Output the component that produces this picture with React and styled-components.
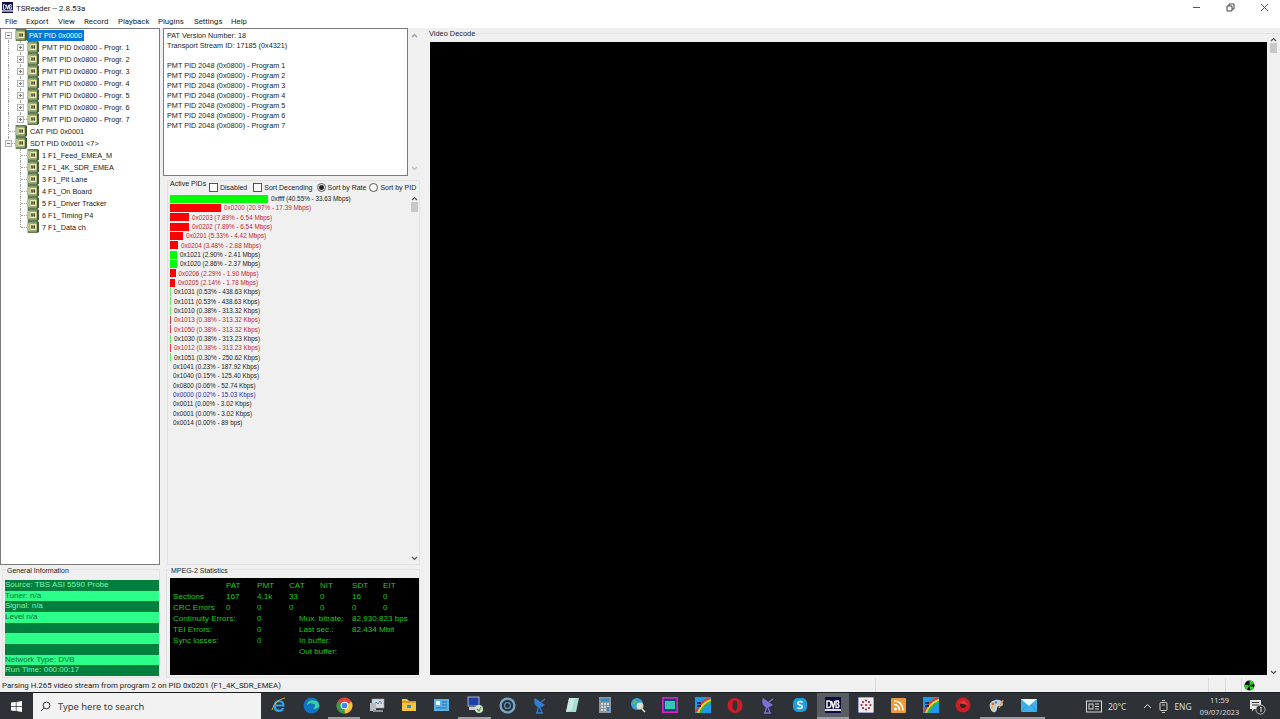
import React from "react";
import styled, { createGlobalStyle } from "styled-components";

const GlobalStyle = createGlobalStyle`
  html, body { margin: 0; padding: 0; background: #f0f0f0; overflow: hidden; }
  * { box-sizing: border-box; }
`;

const Page = styled.div`
  width: 1280px;
  height: 719px;
  display: flex;
  flex-direction: column;
  font-family: "Liberation Sans", Arial, sans-serif;
  color: #1c1c1c;
  overflow: hidden;
`;

const TitleBar = styled.div`
  height: 15px;
  flex: none;
  background: #fff;
  display: flex;
  align-items: center;
  padding-left: 2px;
  font-family: Roboto, sans-serif;
  font-size: 8px;
  gap: 3px;
`;

const TitleText = styled.span`
  flex: 1;
  padding-top: 1px;
`;

const WinButton = styled.div`
  width: 31px;
  height: 15px;
  display: flex;
  align-items: center;
  justify-content: center;
`;

const MenuBar = styled.div`
  height: 13px;
  flex: none;
  background: #fff;
  display: flex;
  align-items: center;
  font-family: Roboto, sans-serif;
  font-size: 7.8px;
  color: #222;
`;

const MenuItem = styled.span`
  width: ${(p) => p.$w}px;
  &:first-child { margin-left: 5px; }
`;

const Main = styled.div`
  height: 650px;
  flex: none;
  display: flex;
`;

const LeftCol = styled.div`
  width: 160px;
  flex: none;
  display: flex;
  flex-direction: column;
`;

const TreeBox = styled.div`
  height: 537px;
  flex: none;
  background: #fff;
  border: 1px solid #7a7a7a;
  padding: 0 0 0 2px;
`;

const TreeRow = styled.div`
  height: 12px;
  display: flex;
  align-items: center;
  font-size: 7.3px;
  white-space: nowrap;
`;

const Guide = styled.span`
  width: 12px;
  height: 12px;
  flex: none;
  position: relative;
  &::before {
    content: "";
    position: absolute;
    left: 5px;
    top: ${(p) => (p.$first ? "6px" : "0")};
    height: ${(p) => (p.$kind === "end" ? "6px" : p.$first ? "6px" : "12px")};
    border-left: 1px dotted ${(p) => (p.$kind === "none" ? "transparent" : "#a0a0a0")};
  }
  &::after {
    content: "";
    position: absolute;
    left: 6px;
    top: 6px;
    width: ${(p) => (p.$kind === "tee" || p.$kind === "end" ? "6px" : "0")};
    border-top: 1px dotted #a0a0a0;
  }
`;

const Expander = styled.span`
  position: absolute;
  left: 2px;
  top: 3px;
  width: 7px;
  height: 7px;
  background: #f4f4f4;
  border: 1px solid #b4b4b4;
  z-index: 1;
  display: flex;
  align-items: center;
  justify-content: center;
  &::before {
    content: "";
    width: 3px;
    border-top: 1px solid #777;
  }
  &::after {
    content: "";
    position: absolute;
    left: 2px;
    top: 0;
    height: 5px;
    display: ${(p) => (p.$open ? "none" : "block")};
    border-left: 1px solid #777;
    transform: scaleY(0.6);
  }
`;

const TreeLabel = styled.span`
  margin-left: ${(p) => (p.$selected ? "0" : "3px")};
  padding: ${(p) => (p.$selected ? "1px 2px" : "0")};
  background: ${(p) => (p.$selected ? "#0078d7" : "transparent")};
  color: ${(p) => (p.$selected ? "#fff" : "#222")};
`;

const Group = styled.div`
  position: relative;
  border: 1px solid #e2e2e2;
  margin: ${(p) => p.$margin || "0"};
  padding: ${(p) => p.$padding || "0"};
  height: ${(p) => p.$h}px;
  display: flex;
  flex-direction: column;
`;

const GroupTitle = styled.span`
  position: absolute;
  left: ${(p) => p.$left || 3}px;
  top: ${(p) => p.$top ?? -4}px;
  padding: 0 1px;
  background: #f0f0f0;
  font-size: ${(p) => p.$size || 7}px;
  line-height: 9px;
`;

const InfoBars = styled.div`
  display: flex;
  flex-direction: column;
`;

const InfoRow = styled.div`
  height: 10.67px;
  line-height: 10.67px;
  font-size: 8px;
  white-space: nowrap;
  background: ${(p) => (p.$dark ? "#00803c" : "#2bff8a")};
  color: ${(p) => (p.$dark ? "#7ff5b0" : "#0b6b38")};
`;

const MidCol = styled.div`
  width: 257px;
  margin-left: 3px;
  flex: none;
  display: flex;
  flex-direction: column;
`;

const TextRow = styled.div`
  height: 148px;
  flex: none;
  display: flex;
`;

const TextPane = styled.div`
  width: 245px;
  flex: none;
  background: #fff;
  border: 1px solid #7a7a7a;
  padding: 2px 3px;
  font-size: 7.25px;
  line-height: 10px;
`;

const TextLine = styled.div`
  height: 10px;
  white-space: nowrap;
`;

const ScrollBar = styled.div`
  width: ${(p) => p.$w || 12}px;
  flex: none;
  display: flex;
  flex-direction: column;
  align-items: center;
  justify-content: space-between;
  padding: ${(p) => p.$pad || "4px 0"};
  margin-top: ${(p) => p.$mt || 0}px;
`;

const ScrollThumb = styled.div`
  width: 7px;
  height: 10px;
  background: #c8c8c8;
  margin-top: 1px;
`;

const ScrollTop = styled.div`
  display: flex;
  flex-direction: column;
  align-items: center;
`;

const PidHeader = styled.div`
  position: absolute;
  left: 2px;
  right: 0;
  top: -2px;
  display: flex;
  align-items: flex-start;
  font-size: 7px;
`;

const PidTitle = styled.span`
  background: #f0f0f0;
  line-height: 9px;
  width: 39px;
  flex: none;
  white-space: nowrap;
`;

const OptionRow = styled.div`
  display: flex;
  align-items: center;
  background: #f0f0f0;
  margin-top: 3px;
  height: 11px;
`;

const Option = styled.label`
  display: flex;
  align-items: center;
  gap: 2px;
  margin-right: ${(p) => p.$gap || 0}px;
  white-space: nowrap;
`;

const CheckBox = styled.span`
  width: 9px;
  height: 9px;
  background: #fff;
  border: 1px solid #555;
  border-radius: ${(p) => (p.$round ? "50%" : "0")};
  display: flex;
  align-items: center;
  justify-content: center;
  &::after {
    content: "";
    display: ${(p) => (p.$on ? "block" : "none")};
    width: 5px;
    height: 5px;
    border-radius: 50%;
    background: #222;
  }
`;

const PidBody = styled.div`
  flex: 1;
  display: flex;
  min-height: 0;
`;

const PidList = styled.div`
  flex: 1;
  padding: 13px 0 0 2px;
`;

const PidRow = styled.div`
  height: 9.33px;
  display: flex;
  align-items: center;
  font-size: 6.35px;
  white-space: nowrap;
  color: ${(p) => p.$color};
`;

const PidBar = styled.span`
  height: 8px;
  flex: none;
  margin-right: 3px;
  background: ${(p) => p.$bar};
  width: ${(p) => p.$w}px;
`;

const StatsPanel = styled.div`
  background: #000;
  height: 97px;
  padding: 2px 0 0 3px;
  display: grid;
  grid-template-columns: 53px 31px 32px 31px 32px 31px 1fr;
  grid-auto-rows: 10.9px;
  align-items: center;
  font-size: 8.1px;
  color: #1fc91f;
  white-space: nowrap;
`;

const StatLabel = styled.span`
  grid-column: ${(p) => p.$col || "auto"};
  padding-left: ${(p) => p.$pad || 0}px;
`;

const RightCol = styled.div`
  width: 858px;
  margin-left: 5px;
  flex: none;
  position: relative;
  height: 650px;
`;

const VideoFrame = styled.div`
  height: 648px;
  margin-top: 5px;
  border-top: 1px solid #e2e2e2;
  padding: 8px 0 0 5px;
  display: flex;
`;

const VideoScreen = styled.div`
  width: 837px;
  height: 633px;
  flex: none;
  background: #000;
`;

const StatusBar = styled.div`
  height: 14px;
  flex: none;
  display: flex;
  align-items: center;
  background: #f0f0f0;
  font-family: Roboto, sans-serif;
  font-size: 7.9px;
  padding-left: 2px;
  color: #222;
`;

const StatusText = styled.span`
  width: 873px;
  flex: none;
  white-space: nowrap;
`;

const StatusCell = styled.span`
  width: ${(p) => p.$w}px;
  height: 14px;
  flex: none;
  border-left: 1px solid #dcdcdc;
  display: flex;
  align-items: center;
  justify-content: center;
`;

const TaskBar = styled.div`
  height: 27px;
  flex: none;
  background: #2e3236;
  display: flex;
  align-items: center;
  color: #e8e8e8;
  font-family: "Noto Sans", sans-serif;
  border-top: 1px solid #1c1f22;
`;

const StartButton = styled.div`
  width: 33px;
  height: 100%;
  flex: none;
  display: flex;
  align-items: center;
  justify-content: center;
`;

const SearchBox = styled.div`
  width: 228px;
  height: 100%;
  flex: none;
  background: #f2f2f2;
  color: #3a3a3a;
  display: flex;
  align-items: center;
  font-size: 9.4px;
  padding-left: 7px;
  gap: 7px;
`;

const TaskIcons = styled.div`
  display: flex;
  height: 100%;
  margin-left: 1.7px;
`;

const TaskIcon = styled.div`
  width: 32.6px;
  height: 100%;
  flex: none;
  display: flex;
  align-items: center;
  justify-content: center;
  background: ${(p) => (p.$active ? "#5a5e62" : "transparent")};
  border-bottom: 2px solid ${(p) => (p.$open ? "#9a9da0" : "transparent")};
`;

const Tray = styled.div`
  flex: 1;
  height: 100%;
  display: flex;
  align-items: center;
  font-size: 8.4px;
  white-space: nowrap;
  padding-left: 41px;
`;

const TrayItem = styled.span`
  margin-left: ${(p) => p.$ml || 0}px;
  display: flex;
  align-items: center;
  color: #dcdcdc;
`;

const Clock = styled.div`
  margin-left: 3px;
  width: 50px;
  flex: none;
  text-align: center;
  font-size: 7.4px;
  line-height: 12px;
  color: #dcdcdc;
`;

const Chip = () => (
  <svg width="12" height="12" viewBox="0 0 11 11">
    <rect x="1" y="0.5" width="9" height="10" fill="#7f9a6a" stroke="#5b6e4b" strokeWidth="0.8" />
    <rect x="0" y="2" width="3" height="7" fill="#b5c49c" />
    <rect x="3" y="2.5" width="6" height="6" fill="#efe9a0" />
    <rect x="4" y="4" width="1.2" height="3" fill="#222" />
    <rect x="6" y="4" width="1.2" height="3" fill="#222" />
    <rect x="9" y="1" width="2" height="9" fill="#3f5a35" />
  </svg>
);

const ArrowUp = ({ c = "#555" }) => (
  <svg width="7" height="5" viewBox="0 0 7 5">
    <path d="M1 4 L3.5 1.5 L6 4" fill="none" stroke={c} strokeWidth="1.2" />
  </svg>
);

const ArrowDown = ({ c = "#555" }) => (
  <svg width="7" height="5" viewBox="0 0 7 5">
    <path d="M1 1 L3.5 3.5 L6 1" fill="none" stroke={c} strokeWidth="1.2" />
  </svg>
);

const DvbLogo = ({ size = 11 }) => (
  <svg width={size} height={size} viewBox="0 0 16 16">
    <rect width="16" height="16" fill="#0b0b45" />
    <rect y="12" width="16" height="2" fill="#fff" opacity="0.85" />
    <path d="M2 4 H4 Q6 4 6 7 Q6 10.5 4 10.5 H2 Z" fill="none" stroke="#fff" strokeWidth="1.4" />
    <path d="M6.5 4 L8.3 10.5 L10 4" fill="none" stroke="#fff" strokeWidth="1.4" />
    <path d="M11 4 H13.5 Q14.5 5.5 12.8 7 Q14.8 8.5 13.5 10.5 H11 Z" fill="none" stroke="#fff" strokeWidth="1.3" />
  </svg>
);

const Rainbow = () => (
  <svg width="16" height="16" viewBox="0 0 16 16">
    <rect width="16" height="16" fill="#1e9be8" />
    <path d="M1 15 Q5 4 15 1" fill="none" stroke="#e8352c" strokeWidth="2" />
    <path d="M3 16 Q7 6 16 3" fill="none" stroke="#f6d21e" strokeWidth="2" />
    <path d="M5 16 Q9 8 16 5" fill="none" stroke="#31b54a" strokeWidth="2" />
    <path d="M2 6 h4 M2 9 h4" stroke="#101040" strokeWidth="1.4" />
  </svg>
);

const Dish = ({ c }) => (
  <svg width="16" height="18" viewBox="0 0 16 18">
    <path d="M3 2 L13 9 Q8 13 4 10 Q1 6 3 2 Z" fill={c} />
    <path d="M7 9 L5 17 M7 9 L10 17 M4 17 H11 M9 6 L13 3" stroke={c} strokeWidth="1.3" fill="none" />
  </svg>
);

const taskIcons = [
  <svg width="16" height="16" viewBox="0 0 16 16"><path d="M13.5 9.5 H5 Q5.2 12.5 8 12.5 Q10 12.5 11 11 H13.4 Q12 15 8 15 Q2.5 15 2.5 9 Q2.5 3.5 8 3 Q13.8 3 13.5 9.5 Z M5.1 7.5 H11 Q10.8 5.2 8 5.2 Q5.5 5.2 5.1 7.5 Z" fill="#2d9fe8" fillRule="evenodd" /><path d="M1 13 Q4 3 14 1" fill="none" stroke="#e8b93a" strokeWidth="0.9" /></svg>,
  <svg width="17" height="17" viewBox="0 0 16 16"><circle cx="8" cy="8" r="7.5" fill="#1272c4" /><path d="M15.5 9 Q15 3 9 3 Q4 3 3.5 8 Q7 4.5 11 7 Q12 9 9.5 10.5 Q12.5 12.5 15.5 9 Z" fill="#39d0a0" /></svg>,
  <svg width="17" height="17" viewBox="0 0 16 16"><circle cx="8" cy="8" r="7.5" fill="#de4437" /><path d="M8 8 L14.6 4.4 A7.5 7.5 0 0 1 8 15.5 Z" fill="#f7c52c" /><path d="M8 8 L8 15.5 A7.5 7.5 0 0 1 1.4 4.4 Z" fill="#2ba24c" /><circle cx="8" cy="8" r="3.6" fill="#fff" /><circle cx="8" cy="8" r="2.7" fill="#4285f4" /></svg>,
  <svg width="16" height="15" viewBox="0 0 16 15"><rect x="3" y="1" width="12" height="9" fill="#d8dce0" stroke="#9a9ea2" strokeWidth="0.6" /><path d="M5 7 L7 4 L9 6 L11 3 L13 6" fill="none" stroke="#3a7fc0" strokeWidth="0.9" /><rect x="1" y="5" width="6" height="8" fill="#b8bcc0" /><rect x="4" y="12" width="10" height="2" fill="#8e9296" /></svg>,
  <svg width="16" height="14" viewBox="0 0 16 14"><path d="M1 1 H6 L8 3 H15 V13 H1 Z" fill="#f5c442" /><rect x="1" y="3" width="14" height="2" fill="#d99a20" /><rect x="6" y="7" width="4" height="3" fill="#2d8fd8" /></svg>,
  <svg width="15" height="12" viewBox="0 0 15 12"><rect width="15" height="12" fill="#5cb1e6" /><rect x="2" y="2" width="4" height="4" fill="#f0f6fa" /><path d="M8 3 H13 M8 6 H13 M2 9 H13" stroke="#1f6fae" strokeWidth="1.2" /></svg>,
  <svg width="18" height="18" viewBox="0 0 18 18"><rect x="2" y="1" width="11" height="9" fill="#1f3fa8" stroke="#c8d0dc" strokeWidth="0.8" /><rect x="3" y="11" width="9" height="3" fill="#c8ccd0" /><circle cx="13" cy="13" r="4" fill="#d8e4d0" /><path d="M11 13 L13 15 L15 11" stroke="#3c9a3c" strokeWidth="1.1" fill="none" /></svg>,
  <svg width="17" height="17" viewBox="0 0 16 16"><circle cx="8" cy="8" r="6.5" fill="none" stroke="#7ba7c9" strokeWidth="2.2" /><circle cx="8" cy="8" r="2.8" fill="none" stroke="#5d8fb5" strokeWidth="1.2" /></svg>,
  <Dish c="#2f7fd0" />,
  <svg width="15" height="16" viewBox="0 0 15 16"><path d="M4 1 H14 L11 15 H1 Z" fill="#a9dcd0" /><path d="M4 1 L1 15 L7 13 L10 1 Z" fill="#d6eee8" opacity="0.7" /></svg>,
  <svg width="12" height="16" viewBox="0 0 12 16"><rect width="12" height="16" fill="#8e979e" /><rect x="1.5" y="1.5" width="9" height="3" fill="#2e8ccf" /><path d="M2 7 h2 M5 7 h2 M8 7 h2 M2 10 h2 M5 10 h2 M8 10 h2 M2 13 h2 M5 13 h2" stroke="#e4e7ea" strokeWidth="1.6" /><path d="M9 10 v4" stroke="#2e8ccf" strokeWidth="2" /></svg>,
  <svg width="16" height="16" viewBox="0 0 16 16"><circle cx="7" cy="7" r="6" fill="#3aa0d8" /><path d="M3 4 Q6 2 7 5 Q5 9 3 7 Z M8 8 Q11 6 12 9 Q10 12 8 11 Z" fill="#5ec24c" /><circle cx="10" cy="9" r="3.5" fill="#f2e8d0" opacity="0.85" /><path d="M12 12 L15 15" stroke="#e8e4d8" strokeWidth="1.6" /></svg>,
  <svg width="16" height="16" viewBox="0 0 16 16"><rect x="0.8" y="0.8" width="14.4" height="14.4" fill="#1c3c80" stroke="#e020c0" strokeWidth="1.6" /><rect x="3" y="4" width="10" height="8" fill="#2fd0a0" /><rect x="5" y="6" width="6" height="3" fill="#40b0e8" /></svg>,
  <Rainbow />,
  <svg width="16" height="17" viewBox="0 0 16 16"><path d="M8 0.5 a7.5 7.5 0 1 0 0.01 0 Z M8 3 Q5.5 3 5.5 8 Q5.5 13 8 13 Q10.5 13 10.5 8 Q10.5 3 8 3 Z" fill="#cf1d26" fillRule="evenodd" /></svg>,
  <Dish c="#7d6fd8" />,
  <svg width="16" height="16" viewBox="0 0 16 16"><rect x="1" y="1" width="14" height="14" rx="5" fill="#1e9ee0" /><path d="M10.6 5.4 Q8 3.8 6 5.4 Q5 7.4 8 8 Q11 8.7 10 10.6 Q8 12.2 5.4 10.6" fill="none" stroke="#fff" strokeWidth="1.5" /></svg>,
  <DvbLogo size={16} />,
  <svg width="16" height="16" viewBox="0 0 16 16"><rect width="16" height="16" rx="1" fill="#f0ecf4" stroke="#3838a8" strokeWidth="0.8" /><g fill="#b02020"><circle cx="8" cy="3.5" r="1.1" /><circle cx="8" cy="12.5" r="1.1" /><circle cx="3.5" cy="8" r="1.1" /><circle cx="12.5" cy="8" r="1.1" /><circle cx="5" cy="5" r="1.1" /><circle cx="11" cy="5" r="1.1" /><circle cx="5" cy="11" r="1.1" /><circle cx="11" cy="11" r="1.1" /><circle cx="8" cy="8" r="1.1" /></g></svg>,
  <svg width="15" height="15" viewBox="0 0 15 15"><rect width="15" height="15" rx="1" fill="#ee9a3a" /><circle cx="4.5" cy="11" r="1.6" fill="#fff" /><path d="M3 6.5 Q8 6.5 8.5 12.5 M3 3 Q11.5 3 12 12.5" fill="none" stroke="#fff" strokeWidth="1.5" /></svg>,
  <Rainbow />,
  <svg width="16" height="16" viewBox="0 0 16 16"><circle cx="8" cy="8" r="7.5" fill="#c81e24" /><circle cx="8" cy="8" r="3" fill="#3a2020" /><path d="M3 6 L9 3 L13 8 Z" fill="#e8353a" /></svg>,
  <svg width="16" height="15" viewBox="0 0 16 15"><path d="M2 10 Q0 4 7 2 Q14 1 15 6 Q15 9 11 8 Q9 8 9 11 Q8 15 5 14 Q3 13 2 10 Z" fill="#c8cdd0" /><circle cx="5" cy="6" r="1.2" fill="#d85a3a" /><circle cx="8" cy="4.5" r="1.2" fill="#3a90d8" /><circle cx="4.5" cy="9.5" r="1.2" fill="#d8c83a" /><path d="M11 10 L15 2" stroke="#d8a04a" strokeWidth="1.4" /></svg>,
  <svg width="16" height="13" viewBox="0 0 16 13"><rect width="16" height="13" fill="#3bb0ea" /><path d="M0 0 L8 7 L16 0 Z" fill="#e8f6fe" /><path d="M0 13 L6 6 M16 13 L10 6" stroke="#1e88c8" strokeWidth="0.6" /></svg>,
];

const openIcons = [2, 6, 22, 23];
const activeIcon = 17;

const treeRows = [
  { label: "PAT PID 0x0000", cells: ["open"], selected: true },
  ...[1, 2, 3, 4, 5, 6, 7].map((n) => ({
    label: `PMT PID 0x0800 - Progr. ${n}`,
    cells: ["line", n === 7 ? "closedEnd" : "closed"],
  })),
  { label: "CAT PID 0x0001", cells: ["tee"] },
  { label: "SDT PID 0x0011 <7>", cells: ["openEnd"] },
  { label: "1 F1_Feed_EMEA_M", cells: ["none", "tee"] },
  { label: "2 F1_4K_SDR_EMEA", cells: ["none", "tee"] },
  { label: "3 F1_Pit Lane", cells: ["none", "tee"] },
  { label: "4 F1_On Board", cells: ["none", "tee"] },
  { label: "5 F1_Driver Tracker", cells: ["none", "tee"] },
  { label: "6 F1_Timing P4", cells: ["none", "tee"] },
  { label: "7 F1_Data ch", cells: ["none", "end"] },
];

const pidRows = [
  ["0xffff (40.55% - 33.63 Mbps)", 98, "g"],
  ["0x0200 (20.97% - 17.39 Mbps)", 51, "r"],
  ["0x0203 (7.89% - 6.54 Mbps)", 19, "r"],
  ["0x0202 (7.89% - 6.54 Mbps)", 19, "r"],
  ["0x0201 (5.33% - 4.42 Mbps)", 13, "r"],
  ["0x0204 (3.48% - 2.88 Mbps)", 8, "r"],
  ["0x1021 (2.90% - 2.41 Mbps)", 7, "g"],
  ["0x1020 (2.86% - 2.37 Mbps)", 7, "g"],
  ["0x0206 (2.29% - 1.90 Mbps)", 5.5, "r"],
  ["0x0205 (2.14% - 1.78 Mbps)", 5, "r"],
  ["0x1031 (0.53% - 438.63 Kbps)", 1, "g"],
  ["0x1011 (0.53% - 438.63 Kbps)", 1, "g"],
  ["0x1010 (0.38% - 313.32 Kbps)", 1, "g"],
  ["0x1013 (0.38% - 313.32 Kbps)", 1, "r"],
  ["0x1050 (0.38% - 313.32 Kbps)", 1, "r"],
  ["0x1030 (0.38% - 313.23 Kbps)", 1, "g"],
  ["0x1012 (0.38% - 313.23 Kbps)", 1, "r"],
  ["0x1051 (0.30% - 250.62 Kbps)", 1, "g"],
  ["0x1041 (0.23% - 187.92 Kbps)", 0, "k"],
  ["0x1040 (0.15% - 125.40 Kbps)", 0, "k"],
  ["0x0800 (0.06% - 52.74 Kbps)", 0, "k"],
  ["0x0000 (0.02% - 15.03 Kbps)", 0, "b"],
  ["0x0011 (0.00% - 3.02 Kbps)", 0, "k"],
  ["0x0001 (0.00% - 3.02 Kbps)", 0, "k"],
  ["0x0014 (0.00% - 89 bps)", 0, "k"],
];

const pidText = { g: "#222", k: "#222", r: "#c9252d", b: "#2a2ab8" };
const pidBar = { g: "#00ff00", r: "#ff0000", k: "transparent", b: "transparent" };

const infoRows = [
  "Source: TBS ASI 5590 Probe",
  "Tuner: n/a",
  "Signal: n/a",
  "Level n/a",
  "",
  "",
  "",
  "Network Type: DVB",
  "Run Time: 000:00:17",
];

const paneLines = [
  "PAT Version Number: 18",
  "Transport Stream ID: 17185 (0x4321)",
  "",
  ...[1, 2, 3, 4, 5, 6, 7].map((n) => `PMT PID 2048 (0x0800) - Program ${n}`),
];

const TreeCell = ({ kind }) => {
  if (kind === "open") return <Guide $first $kind="line"><Expander $open /></Guide>;
  if (kind === "openEnd") return <Guide $kind="end"><Expander $open /></Guide>;
  if (kind === "closed") return <Guide $kind="line"><Expander /></Guide>;
  if (kind === "closedEnd") return <Guide $kind="end"><Expander /></Guide>;
  return <Guide $kind={kind} />;
};

const App = () => (
  <Page>
    <GlobalStyle />
    <TitleBar>
      <DvbLogo />
      <TitleText>TSReader -- 2.8.53a</TitleText>
      <WinButton>
        <svg width="9" height="9" viewBox="0 0 9 9"><path d="M1 4.5 H8" stroke="#555" /></svg>
      </WinButton>
      <WinButton>
        <svg width="9" height="9" viewBox="0 0 9 9"><path d="M1 3 H6 V8 H1 Z M3 3 V1 H8 V6 H6" fill="none" stroke="#444" /></svg>
      </WinButton>
      <WinButton>
        <svg width="9" height="9" viewBox="0 0 9 9"><path d="M1 1 L8 8 M8 1 L1 8" stroke="#555" /></svg>
      </WinButton>
    </TitleBar>
    <MenuBar>
      <MenuItem $w={21}>File</MenuItem>
      <MenuItem $w={32}>Export</MenuItem>
      <MenuItem $w={26}>View</MenuItem>
      <MenuItem $w={34}>Record</MenuItem>
      <MenuItem $w={40}>Playback</MenuItem>
      <MenuItem $w={36}>Plugins</MenuItem>
      <MenuItem $w={37}>Settings</MenuItem>
      <MenuItem $w={30}>Help</MenuItem>
    </MenuBar>
    <Main>
      <LeftCol>
        <TreeBox>
          {treeRows.map((row) => (
            <TreeRow key={row.label}>
              {row.cells.map((cell, i) => (
                <TreeCell key={i} kind={cell} />
              ))}
              <Chip />
              <TreeLabel $selected={row.selected}>{row.label}</TreeLabel>
            </TreeRow>
          ))}
        </TreeBox>
        <Group $h={109} $margin="4px 0 0 2px" $padding="10px 0 0 2px">
          <GroupTitle>General Information</GroupTitle>
          <InfoBars>
            {infoRows.map((text, i) => (
              <InfoRow key={i} $dark={i % 2 === 0}>{text}</InfoRow>
            ))}
          </InfoBars>
        </Group>
      </LeftCol>
      <MidCol>
        <TextRow>
          <TextPane>
            {paneLines.map((line, i) => (
              <TextLine key={i}>{line}</TextLine>
            ))}
          </TextPane>
          <ScrollBar $pad="5px 0">
            <ArrowUp c="#999" />
            <ArrowDown c="#bbb" />
          </ScrollBar>
        </TextRow>
        <Group $h={387} $margin="4px 0 0 4px">
          <PidHeader>
            <PidTitle>Active PIDs</PidTitle>
            <OptionRow>
              <Option $gap={6}><CheckBox />Disabled</Option>
              <Option $gap={4}><CheckBox />Sort Decending</Option>
              <Option $gap={3}><CheckBox $round $on />Sort by Rate</Option>
              <Option><CheckBox $round />Sort by PID</Option>
            </OptionRow>
          </PidHeader>
          <PidBody>
            <PidList>
              {pidRows.map(([text, w, kind]) => (
                <PidRow key={text} $color={pidText[kind]}>
                  <PidBar $w={w} $bar={w === 1 ? (kind === "r" ? "#e04040" : "#60ee60") : pidBar[kind]} />
                  {text}
                </PidRow>
              ))}
            </PidList>
            <ScrollBar $w={9} $pad="15px 0 3px">
              <ScrollTop>
                <ArrowUp />
                <ScrollThumb />
              </ScrollTop>
              <ArrowDown />
            </ScrollBar>
          </PidBody>
        </Group>
        <Group $h={109} $margin="4px 0 0 3px" $padding="8px 0 0 3px">
          <GroupTitle>MPEG-2 Statistics</GroupTitle>
          <StatsPanel>
            <span />
            <span>PAT</span><span>PMT</span><span>CAT</span><span>NIT</span><span>SDT</span><span>EIT</span>
            <span>Sections</span>
            <span>167</span><span>4.1k</span><span>33</span><span>0</span><span>16</span><span>0</span>
            <span>CRC Errors</span>
            <span>0</span><span>0</span><span>0</span><span>0</span><span>0</span><span>0</span>
            <StatLabel $col="1 / 3">Continuity Errors:</StatLabel>
            <StatLabel $col={3}>0</StatLabel>
            <StatLabel $col="4 / 6" $pad={10}>Mux. bitrate:</StatLabel>
            <StatLabel $col="6 / 8">82,930,823 bps</StatLabel>
            <StatLabel $col="1 / 3">TEI Errors:</StatLabel>
            <StatLabel $col={3}>0</StatLabel>
            <StatLabel $col="4 / 6" $pad={10}>Last sec.:</StatLabel>
            <StatLabel $col="6 / 8">82.434 Mbit</StatLabel>
            <StatLabel $col="1 / 3">Sync losses:</StatLabel>
            <StatLabel $col={3}>0</StatLabel>
            <StatLabel $col="4 / 6" $pad={10}>In buffer:</StatLabel>
            <StatLabel $col="4 / 6" $pad={10}>Out buffer:</StatLabel>
          </StatsPanel>
        </Group>
      </MidCol>
      <RightCol>
        <GroupTitle $left={3} $top={1} $size={7.4}>Video Decode</GroupTitle>
        <VideoFrame>
          <VideoScreen />
          <ScrollBar $w={12} $pad="0 0 6px" $mt={-5}>
            <ScrollTop>
              <ArrowUp />
              <ScrollThumb />
            </ScrollTop>
            <ArrowDown />
          </ScrollBar>
        </VideoFrame>
      </RightCol>
    </Main>
    <StatusBar>
      <StatusText>Parsing H.265 video stream from program 2 on PID 0x0201 (F1_4K_SDR_EMEA)</StatusText>
      <StatusCell $w={333} />
      <StatusCell $w={17} />
      <StatusCell $w={16} />
      <StatusCell $w={16}>
        <svg width="11" height="11" viewBox="0 0 12 12">
          <circle cx="6" cy="6" r="5.5" fill="#0a0a0a" />
          <path d="M6 6 L6 .5 A5.5 5.5 0 0 1 11 4 Z M6 6 L11 8 A5.5 5.5 0 0 1 7 11.4 Z M6 6 L3 10.6 A5.5 5.5 0 0 1 .6 5 Z" fill="#22d422" />
        </svg>
      </StatusCell>
    </StatusBar>
    <TaskBar>
      <StartButton>
        <svg width="11" height="11" viewBox="0 0 11 11">
          <path d="M0 1.6 L4.8 1 V5.2 H0 Z M5.5 .9 L11 0 V5.2 H5.5 Z M0 5.9 H4.8 V10 L0 9.4 Z M5.5 5.9 H11 V11 L5.5 10.1 Z" fill="#fff" />
        </svg>
      </StartButton>
      <SearchBox>
        <svg width="11" height="11" viewBox="0 0 11 11">
          <circle cx="6.5" cy="4.5" r="3.4" fill="none" stroke="#333" />
          <path d="M4 7 L1 10" stroke="#333" />
        </svg>
        Type here to search
      </SearchBox>
      <TaskIcons>
        {taskIcons.map((icon, i) => (
          <TaskIcon key={i} $active={i === activeIcon} $open={openIcons.includes(i) || i === activeIcon}>
            {icon}
          </TaskIcon>
        ))}
      </TaskIcons>
      <Tray>
        <TrayItem>
          <svg width="16" height="13" viewBox="0 0 16 13">
            <rect x="0.5" y="1" width="15" height="11" fill="none" stroke="#d8d8d8" />
            <rect x="3" y="4" width="4" height="5" fill="none" stroke="#d8d8d8" />
            <path d="M9 4 H13 M9 6.5 H13 M9 9 H13" stroke="#d8d8d8" />
          </svg>
        </TrayItem>
        <TrayItem $ml={6}>20°C</TrayItem>
        <TrayItem $ml={17}>
          <svg width="9" height="6" viewBox="0 0 9 6"><path d="M1 5 L4.5 1.5 L8 5" fill="none" stroke="#ddd" /></svg>
        </TrayItem>
        <TrayItem $ml={7}>
          <svg width="9" height="13" viewBox="0 0 9 13">
            <rect x="1" y="2.5" width="7" height="8" rx="1" fill="none" stroke="#ccc" />
            <path d="M3 .5 H6 M3 12.5 H6 M3 5 H6" stroke="#ccc" />
          </svg>
        </TrayItem>
        <TrayItem $ml={6}>ENG</TrayItem>
        <Clock>
          <div>11:59</div>
          <div>09/07/2023</div>
        </Clock>
        <TrayItem $ml={4}>
          <svg width="17" height="17" viewBox="0 0 17 17">
            <path d="M1 2 H12 V11 H5 L3 13.5 V11 H1 Z" fill="#e8e8e8" />
            <path d="M3 4.5 H10 M3 7 H10" stroke="#2e3236" />
            <circle cx="11.5" cy="11.5" r="4.6" fill="#2e3236" stroke="#d8d8d8" strokeWidth="0.8" />
            <path d="M11 9.5 L12 9 V14" stroke="#eee" fill="none" />
          </svg>
        </TrayItem>
      </Tray>
    </TaskBar>
  </Page>
);

export default App;
